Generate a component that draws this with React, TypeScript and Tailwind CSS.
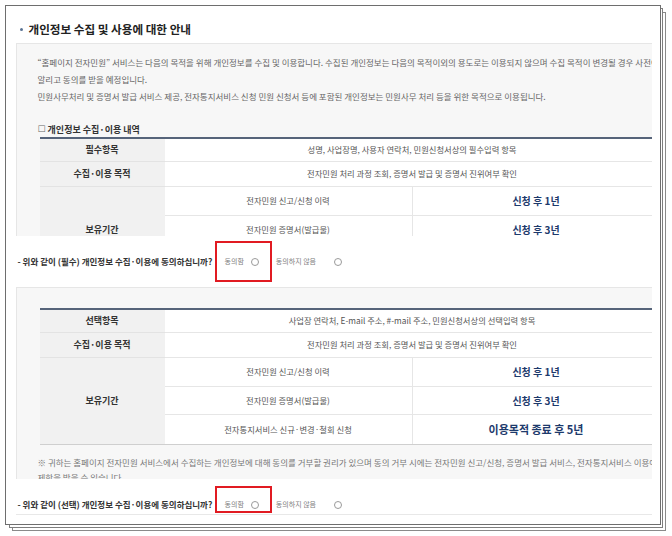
import React from 'react'

interface Period {
  what: string
  keep: string
}

interface TableProps {
  label: string
  items: string
  periods: Period[]
  closed?: boolean
}

const periods: Period[] = [
  { what: '전자민원 신고/신청 이력', keep: '신청 후 1년' },
  { what: '전자민원 증명서(발급물)', keep: '신청 후 3년' },
  { what: '전자통지서비스 신규·변경·철회 신청', keep: '이용목적 종료 후 5년' },
]

function HeadCell({ children, className = '' }: { children: React.ReactNode; className?: string }) {
  return (
    <div className={`flex items-center justify-center bg-[#f1f1f1] border-b border-[#e3e3e3] text-[9px] font-bold text-[#333] ${className}`}>
      {children}
    </div>
  )
}

function InfoTable({ label, items, periods, closed }: TableProps) {
  return (
    <div
      className={`ml-[2px] w-[620px] grid grid-cols-[125px_248px_247px] grid-rows-[23px_25px_29px_28px_29px] border-t-2 border-t-[#56647a] ${closed ? 'border-b border-b-[#cfcfcf]' : ''}`}
    >
      <HeadCell>{label}</HeadCell>
      <div className="col-span-2 flex items-center justify-center bg-white border-b border-[#e6e6e6] text-[8.3px] text-[#555] whitespace-nowrap">
        {items}
      </div>
      <HeadCell>수집·이용 목적</HeadCell>
      <div className="col-span-2 flex items-center justify-center bg-white border-b border-[#e6e6e6] text-[8.3px] text-[#555] whitespace-nowrap">
        전자민원 처리 과정 조회, 증명서 발급 및 증명서 진위여부 확인
      </div>
      <HeadCell className="row-span-3 border-b-0">보유기간</HeadCell>
      {periods.map((p, i) => {
        const last = i === periods.length - 1
        return (
          <React.Fragment key={p.what}>
            <div
              className={`flex items-center justify-center bg-white border-r border-[#e6e6e6] text-[8.3px] text-[#555] whitespace-nowrap ${last ? '' : 'border-b'}`}
            >
              {p.what}
            </div>
            <div
              className={`flex items-center justify-center bg-white border-[#e6e6e6] font-bold text-[#1d3a6c] whitespace-nowrap ${last ? 'text-[11px]' : 'border-b text-[10px]'}`}
            >
              {p.keep}
            </div>
          </React.Fragment>
        )
      })}
    </div>
  )
}

function Radio() {
  return <span className="inline-block w-[8px] h-[8px] rounded-full border border-[#9a9a9a] bg-white" />
}

function Consent({ kind, height, boxTop, boxHeight, last }: { kind: string; height: string; boxTop: string; boxHeight: string; last?: boolean }) {
  return (
    <div className={`relative ml-[9.5px] w-[636px] ${height} pl-[2px] pt-[18px] ${last ? 'border-b border-[#e8e8e8]' : ''}`}>
      <div className="flex items-center h-[16px]">
        <div className="w-[207px] text-[8.5px] font-bold text-[#333] whitespace-nowrap">
          - 위와 같이 ({kind}) 개인정보 수집·이용에 동의하십니까?
        </div>
        <span className="text-[7px] text-[#808080] whitespace-nowrap">동의함</span>
        <span className="ml-[7px] flex"><Radio /></span>
        <span className="ml-[17px] text-[7px] text-[#808080] whitespace-nowrap">동의하지 않음</span>
        <span className="ml-[18px] flex"><Radio /></span>
      </div>
      <div className={`absolute left-[199px] w-[57px] ${boxTop} ${boxHeight} border-[2.5px] border-[#e11b22]`} />
    </div>
  )
}

export default function App() {
  return (
    <div className="relative w-[672px] h-[536px] bg-white overflow-hidden font-['Noto_Sans_CJK_KR','Noto_Sans',sans-serif]">
      {/* stacked sheets behind */}
      <div className="absolute left-[12px] top-[12px] w-[654px] h-[519px] border-[1.5px] border-[#8a8a8a] bg-white" />
      <div className="absolute left-[9px] top-[8px] w-[654px] h-[520px] border-[1.5px] border-[#7e7e7e] bg-white" />

      <div className="absolute left-[5px] top-[5px] w-[656px] h-[520px] border-[1.5px] border-[#6e6e6e] bg-white overflow-hidden">
        {/* title */}
        <div className="h-[36.5px] pt-[15.5px] pl-[14px] flex items-start">
          <div className="flex items-center h-[16px]">
            <span className="inline-block w-[3px] h-[3px] rounded-full bg-[#5a7394] mr-[5.5px]" />
            <span className="text-[11.6px] font-bold text-[#222] whitespace-nowrap">개인정보 수집 및 사용에 대한 안내</span>
          </div>
        </div>

        {/* required */}
        <div className="ml-[9.5px] w-[636px] h-[193px] overflow-hidden bg-[#f7f7f7] border-t border-l border-[#e6e6e6] pl-[21px] pt-[10.5px]">
          <div className="text-[8.5px] leading-[17px] text-[#666] whitespace-nowrap">
            <div>“홈페이지 전자민원” 서비스는 다음의 목적을 위해 개인정보를 수집 및 이용합니다. 수집된 개인정보는 다음의 목적이외의 용도로는 이용되지 않으며 수집 목적이 변경될 경우 사전에</div>
            <div>알리고 동의를 받을 예정입니다.</div>
            <div>민원사무처리 및 증명서 발급 서비스 제공, 전자통지서비스 신청 민원 신청서 등에 포함된 개인정보는 민원사무 처리 등을 위한 목적으로 이용됩니다.</div>
          </div>
          <div className="mt-[17.5px] h-[14px] flex items-center text-[9px] text-[#333] whitespace-nowrap">
            <span className="text-[#666] font-['DejaVu_Sans',sans-serif] text-[9px] mr-[2px]">☐</span>
            <span className="font-bold">개인정보 수집·이용 내역</span>
          </div>
          <InfoTable label="필수항목" items="성명, 사업장명, 사용자 연락처, 민원신청서상의 필수입력 항목" periods={periods} />
        </div>

        <Consent kind="필수" height="h-[51px]" boxTop="top-[5px]" boxHeight="h-[41px]" />

        {/* optional */}
        <div className="ml-[9.5px] w-[636px] h-[192px] overflow-hidden bg-[#f7f7f7] border-t border-l border-[#e6e6e6] pl-[21px] pt-[20px]">
          <InfoTable
            label="선택항목"
            items="사업장 연락처, E-mail 주소, #-mail 주소, 민원신청서상의 선택입력 항목"
            periods={periods}
            closed
          />
          <div className="mt-[10.5px] text-[8.5px] leading-[15px] text-[#777] whitespace-nowrap">
            <div>※ 귀하는 홈페이지 전자민원 서비스에서 수집하는 개인정보에 대해 동의를 거부할 권리가 있으며 동의 거부 시에는 전자민원 신고/신청, 증명서 발급 서비스, 전자통지서비스 이용에</div>
            <div>제한을 받을 수 있습니다.</div>
          </div>
        </div>

        <Consent kind="선택" height="h-[36px]" boxTop="top-[7px]" boxHeight="h-[27px]" last />
      </div>
    </div>
  )
}
